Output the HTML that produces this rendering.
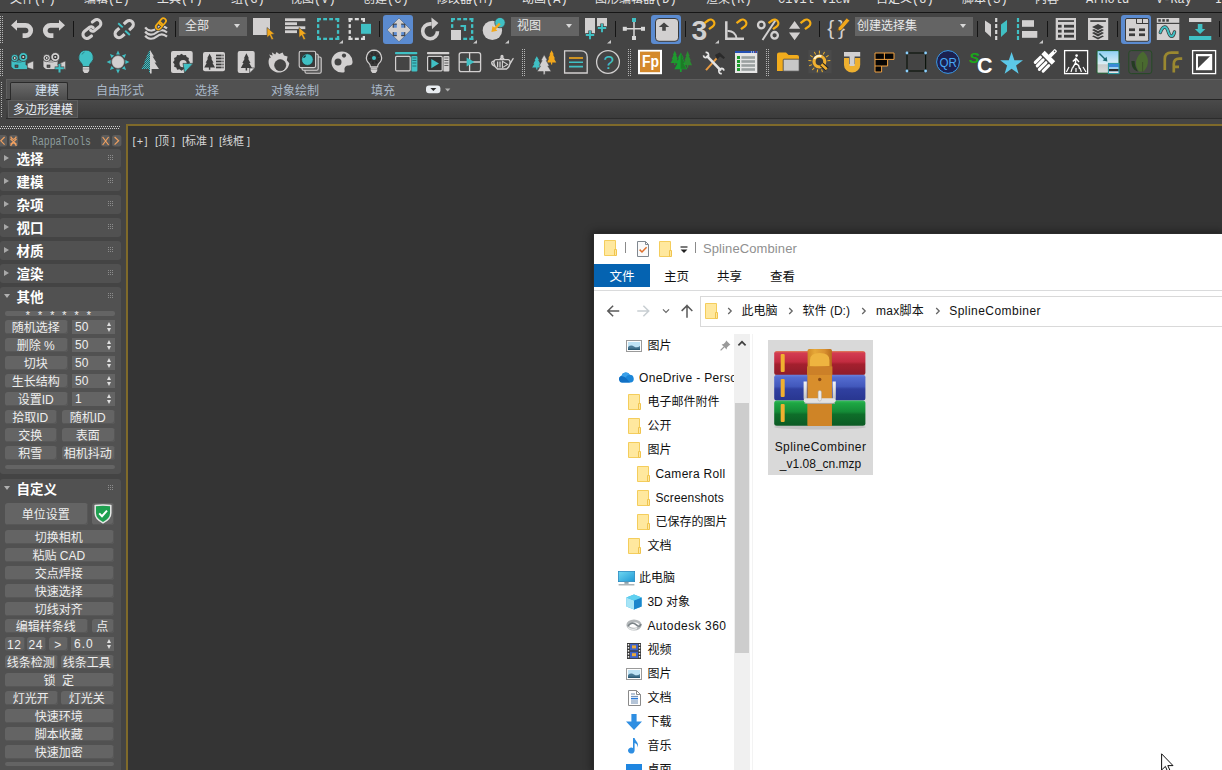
<!DOCTYPE html>
<html lang="zh-CN">
<head>
<meta charset="utf-8">
<title>SplineCombiner</title>
<style>
*{box-sizing:border-box;margin:0;padding:0}
html,body{width:1222px;height:770px;overflow:hidden;background:#444444}
body{position:relative;font-family:"Liberation Sans","Noto Sans CJK SC",sans-serif;font-size:12px;color:#e0e0e0}
.abs{position:absolute}
#app{position:absolute;left:0;top:0;width:1222px;height:770px;overflow:hidden;background:#444444}
/* ---------- menu ---------- */
#menubar{position:absolute;left:0;top:0;width:1222px;height:12px;background:#454545;overflow:hidden}
#menubar span{position:absolute;top:-7px;font:12px/14px "Liberation Mono","Noto Sans CJK SC",monospace;color:#e6e6e6;white-space:nowrap;}
#menubar span b{font-weight:normal;letter-spacing:0;font-family:"Noto Sans CJK SC",sans-serif}
#menuline{position:absolute;left:0;top:12px;width:1222px;height:1px;background:#161616}
/* ---------- toolbars ---------- */
.tb svg{position:absolute;width:32px;height:32px;overflow:visible}
.r1 svg{top:13px}
.r2 svg{top:46px}
.sep{position:absolute;width:1px;background:#1e1e1e}
.r1 .sep{top:20px;height:17px}
.dsep{position:absolute;top:49px;height:27px;width:3px;background-image:repeating-linear-gradient(to bottom,transparent 0 1px,#444 1px 2px),linear-gradient(90deg,#b4b4b4 0 1px,#444 1px 2px,#b4b4b4 2px 3px)}
.grip{position:absolute;left:0;width:3px;background-image:repeating-linear-gradient(to bottom,transparent 0 1px,#444 1px 2px),linear-gradient(90deg,#b4b4b4 0 1px,#444 1px 2px,#b4b4b4 2px 3px)}
.dd{position:absolute;top:17px;height:19px;background:#646464;color:#e8e8e8;font:12px/18px "Liberation Sans","Noto Sans CJK SC",sans-serif;padding-left:6px;white-space:nowrap}
.dd:after{content:"";position:absolute;right:7px;top:7px;border:3px solid transparent;border-top:4px solid #d8d8d8;border-bottom:0}
.act{position:absolute;background:#5b8bd0;border-radius:3px}
/* ---------- ribbon ---------- */
#ribbon{position:absolute;left:6px;top:79px;width:1216px;height:40px}
#rtabs{position:absolute;left:0;top:0;width:1216px;height:21px;background:#515151;border-top:1px solid #5e5e5e;border-left:1px solid #5e5e5e}
#rpanel{position:absolute;left:0;top:20px;width:1216px;height:20px;background:linear-gradient(#4a4a4a,#3b3b3b);border-top:1px solid #242424;border-bottom:1px solid #2c2c2c}
.rtab{position:absolute;top:3px;height:18px;font:12px/18px "Liberation Sans","Noto Sans CJK SC",sans-serif;color:#aab8c8;white-space:nowrap}
#rtab-act{position:absolute;left:4px;top:3px;width:58px;height:19px;background:linear-gradient(#6a6a6a,#4a4a4a);border:1px solid #2a2a2a;border-bottom:0;border-radius:2px 2px 0 0}
#rlabel{position:absolute;left:2px;top:21px;width:70px;height:18px;background:#4f4f4f;border:1px solid #5e5e5e;color:#e8ecf2;font:12px/18px "Liberation Sans","Noto Sans CJK SC",sans-serif;padding-left:4px;white-space:nowrap}
/* ---------- left panel ---------- */
#lp{position:absolute;left:0;top:0;width:126px;height:770px;overflow:hidden}
.ro{position:absolute;left:0;width:121px;background:#515151;border-radius:3px}
.roh{position:absolute;left:0;width:121px;height:19px}
.roh i{position:absolute;left:4px;top:6px;border:3px solid transparent;border-left:5px solid #a8a8a8;border-right:0}
.roh i.dn{left:4px;top:7px;border:3px solid transparent;border-top:4.5px solid #b0b0b0;border-bottom:0}
.roh b{position:absolute;left:16.5px;top:1.5px;font:bold 13.5px/17px "Liberation Sans","Noto Sans CJK SC",sans-serif;color:#ffffff;white-space:nowrap}
.roh u{position:absolute;left:108px;top:6px;width:6px;height:6px;background:radial-gradient(circle at .5px .5px,#8c8c8c .6px,transparent .7px) 0 0/2px 2px}
.btn{position:absolute;height:14px;background:#646464;border-radius:3px;box-shadow:inset -1px -1px 0 #575757;color:#eeeeee;font:12px/16px "Liberation Sans","Noto Sans CJK SC",sans-serif;text-align:center;white-space:nowrap;overflow:hidden;padding-right:1.5px}
.spn{position:absolute;height:14px;background:#646464;color:#eeeeee;font:12px/15px "Liberation Sans","Noto Sans CJK SC",sans-serif;padding-left:3px;white-space:nowrap}
.spn:before{content:"";position:absolute;right:3.5px;top:2px;border:2.8px solid transparent;border-bottom:4px solid #e0e0e0;border-top:0}
.spn:after{content:"";position:absolute;right:3.5px;top:7.6px;border:2.8px solid transparent;border-top:4px solid #e0e0e0;border-bottom:0}
.bar{position:absolute;left:5px;width:108px;height:4px;background:#646464;border-radius:2px}
/* ---------- viewport ---------- */
#vp{position:absolute;left:126px;top:124px;width:1096px;height:646px;background:#343434;border-left:2px solid #7f6a2a;border-top:2px solid #7f6a2a}
#vplabel{position:absolute;left:5px;top:8px;font:11px/14px "Liberation Sans","Noto Sans CJK SC",sans-serif;color:#d6d6d6;white-space:nowrap}#vplabel span{position:absolute;top:0}
/* ---------- explorer ---------- */
#ex{position:absolute;left:594px;top:234px;width:628px;height:536px;background:#ffffff;color:#000;box-shadow:0 0 0 1px #2b2b2b,0 0 8px 2px rgba(0,0,0,.45);overflow:hidden;font-family:"Liberation Sans","Noto Sans CJK SC",sans-serif}
#ex .t{position:absolute;white-space:nowrap;font-size:12px;line-height:16px;color:#111}
#ex svg{position:absolute;overflow:visible}
#ex .tt{letter-spacing:-.15px}
#ex .a1,#ex .f1{letter-spacing:.45px}
#ex .ad{letter-spacing:.47px}
#ex .od{letter-spacing:.35px;width:95px;overflow:hidden}
#ex .cr{letter-spacing:.3px}
#ex .ss{letter-spacing:.17px}
</style>
</head>
<body>
<div id="app">
<div id="menubar"><span style="left:10px">文件(F)</span><span style="left:84px">编辑(E)</span><span style="left:157px">工具(T)</span><span style="left:231px">组(G)</span><span style="left:290px">视图(V)</span><span style="left:363px">创建(C)</span><span style="left:436px">修改器(M)</span><span style="left:522px">动画(A)</span><span style="left:595px">图形编辑器(D)</span><span style="left:706px">渲染(R)</span><span style="left:778px">Civil View</span><span style="left:876px">自定义(U)</span><span style="left:962px">脚本(S)</span><span style="left:1035px">内容</span><span style="left:1086px">Arnold</span><span style="left:1156px">V-Ray</span><span style="left:1215px">Interactive</span></div><div id="menuline"></div>
<div class="grip" style="top:16px;height:27px"></div>
<div class="act" style="left:383px;top:15px;width:30px;height:29px"></div>
<div class="act" style="left:651px;top:15px;width:30px;height:29px"></div>
<div class="act" style="left:1121px;top:15px;width:30px;height:29px"></div>
<div class="dd" style="left:179px;width:68px">全部</div>
<div class="dd" style="left:511px;width:68px">视图</div>
<div class="dd" style="left:855px;width:118px;padding-left:2px">创建选择集</div>
<svg class="abs" style="left:0;top:13px" width="1222" height="34" viewBox="0 13 1222 34">
<defs>
<path id="mag" d="M-3.75,4.8 V0 A3.75,3.75 0 0 1 3.75,0 V4.8" fill="none" stroke="#f5ad14" stroke-width="2.3"/>
<path id="fly" d="M0,3.5 L4,3.5 L4,0 Z" fill="#c8c8c8"/>
<path id="cur" d="M0,0 L7.6,6.4 L4.4,7 L6.6,11.4 L4.6,12.3 L2.6,7.9 L0,10 Z" fill="#f2a71b" stroke="#444" stroke-width=".6"/>
</defs>
<g fill="#151515">
<rect x="73" y="21" width="1" height="16"/><rect x="175" y="21" width="1" height="16"/><rect x="379" y="21" width="1" height="16"/>
<rect x="615" y="21" width="1" height="16"/><rect x="685" y="21" width="1" height="16"/><rect x="819" y="21" width="1" height="16"/>
<rect x="977" y="21" width="1" height="16"/><rect x="1047" y="21" width="1" height="16"/><rect x="1117" y="21" width="1" height="16"/><rect x="1219" y="21" width="1" height="16"/>
</g>
<!-- undo -->
<g fill="none" stroke="#d2d0d0" stroke-width="4.7">
<path d="M16.5,25.35 H25.6 A5.15,5.15 0 0 1 25.6,35.65 H22.6"/>
<path d="M59.5,25.35 H50.4 A5.15,5.15 0 0 0 50.4,35.65 H53.4"/>
</g>
<path d="M11,25.3 L17,19.8 V30.8 Z M65,25.3 L59,19.8 V30.8 Z" fill="#d2d0d0"/>
<!-- link -->
<g fill="none" stroke="#d2d0d0" stroke-width="3.1" stroke-linecap="round" transform="translate(91.9,29) rotate(-38)">
<path d="M-4.6,5.2 H-7.2 A4,4 0 0 1 -7.2,-2.8 H-0.8 A2.6,2.6 0 0 1 1.8,-0.2"/>
<path d="M4.6,-5.2 H7.2 A4,4 0 0 1 7.2,2.8 H0.8 A2.6,2.6 0 0 1 -1.8,0.2"/>
</g>
<!-- unlink -->
<g fill="none" stroke="#d2d0d0" stroke-width="3.1" transform="translate(124.2,29.1) rotate(-42)">
<path d="M-3,-4 H-6.9 A4,4 0 0 0 -6.9,4 H-3"/>
<path d="M3,-4 H6.9 A4,4 0 0 1 6.9,4 H3"/>
</g>
<path d="M118.2,23.2 L122.8,27.4 M125.2,30.8 L129.8,35" stroke="#40c0c4" stroke-width="1.9"/>
<!-- bind space warp -->
<g fill="none" stroke="#d2d0d0" stroke-width="2.2">
<path d="M145.2,27.4 C148,31.4 153,31.4 156.5,28.4 S163,24.9 167,28.4"/>
<path d="M145.2,31.5 C148,35.5 153,35.5 156.5,32.5 S163,29 167,32.5"/>
<path d="M145.2,35.6 C148,39.6 153,39.6 156.5,36.6 S163,33.1 167,36.6"/>
</g>
<g fill="none" stroke="#444" stroke-width="3.4" transform="translate(160.9,23.8) rotate(-50)">
<rect x="-6.5" y="-2.6" width="7.5" height="5.2" rx="2.6"/><rect x="-1" y="-2.6" width="7.5" height="5.2" rx="2.6"/>
</g>
<g fill="none" stroke="#f5ad14" stroke-width="1.7" transform="translate(160.9,23.8) rotate(-50)">
<rect x="-6.5" y="-2.6" width="7.5" height="5.2" rx="2.6"/><rect x="-1" y="-2.6" width="7.5" height="5.2" rx="2.6"/>
</g>
<!-- select object -->
<rect x="253" y="18" width="17" height="17" fill="#d2d0d0"/>
<use href="#cur" x="267" y="27.5"/>
<!-- select by name -->
<g fill="#d2d0d0"><rect x="285" y="18.3" width="20.3" height="2.8"/><rect x="285" y="22.3" width="12" height="2.8"/><rect x="285" y="26.3" width="20.3" height="2.8"/><rect x="285" y="30.3" width="12" height="2.8"/></g>
<use href="#cur" x="299" y="27.5"/>
<!-- rect region -->
<g fill="#40c0c4"><rect x="317.00" y="18.00" width="4.00" height="2.30"/><rect x="317.00" y="37.70" width="4.00" height="2.30"/><rect x="323.20" y="18.00" width="3.80" height="2.30"/><rect x="323.20" y="37.70" width="3.80" height="2.30"/><rect x="329.20" y="18.00" width="3.80" height="2.30"/><rect x="329.20" y="37.70" width="3.80" height="2.30"/><rect x="335.20" y="18.00" width="4.00" height="2.30"/><rect x="335.20" y="37.70" width="4.00" height="2.30"/><rect x="317.00" y="18.00" width="2.30" height="4.00"/><rect x="336.90" y="18.00" width="2.30" height="4.00"/><rect x="317.00" y="24.20" width="2.30" height="3.70"/><rect x="336.90" y="24.20" width="2.30" height="3.70"/><rect x="317.00" y="30.10" width="2.30" height="3.70"/><rect x="336.90" y="30.10" width="2.30" height="3.70"/><rect x="317.00" y="36.00" width="2.30" height="4.00"/><rect x="336.90" y="36.00" width="2.30" height="4.00"/></g>
<use href="#fly" x="339" y="40"/>
<!-- window crossing -->
<g fill="#dcdcdc"><rect x="348.60" y="18.00" width="4.00" height="2.30"/><rect x="348.60" y="37.70" width="4.00" height="2.30"/><rect x="354.80" y="18.00" width="4.00" height="2.30"/><rect x="354.80" y="37.70" width="4.00" height="2.30"/><rect x="361.00" y="18.00" width="4.00" height="2.30"/><rect x="361.00" y="37.70" width="4.00" height="2.30"/><rect x="348.60" y="18.00" width="2.30" height="4.00"/><rect x="362.70" y="18.00" width="2.30" height="4.00"/><rect x="348.60" y="24.20" width="2.30" height="3.70"/><rect x="362.70" y="24.20" width="2.30" height="3.70"/><rect x="348.60" y="30.10" width="2.30" height="3.70"/><rect x="362.70" y="30.10" width="2.30" height="3.70"/><rect x="348.60" y="36.00" width="2.30" height="4.00"/><rect x="362.70" y="36.00" width="2.30" height="4.00"/></g>
<rect x="360.5" y="23.3" width="11" height="11" fill="#40c0c4" stroke="#444" stroke-width="1"/>
<!-- move -->
<g transform="translate(399,29.9)">
<path d="M0,-11.9 L11.9,0 L0,11.9 L-11.9,0 Z" fill="#d2d0d0" stroke="#46607e" stroke-width=".6"/>
<g fill="#5b8bd0"><rect x="-5.8" y="-5.8" width="3.6" height="3.6"/><rect x="2.2" y="-5.8" width="3.6" height="3.6"/><rect x="-5.8" y="2.2" width="3.6" height="3.6"/><rect x="2.2" y="2.2" width="3.6" height="3.6"/></g>
<path d="M-5.8,-2.2 V-5.8 H-2.2 M5.8,-2.2 V-5.8 H2.2 M-5.8,2.2 V5.8 H-2.2 M5.8,2.2 V5.8 H2.2" fill="none" stroke="#333" stroke-width="1"/>
</g>
<!-- rotate -->
<path d="M431.6,23.9 H430.1 A7.4,7.4 0 1 0 437.5,31.2" fill="none" stroke="#d2d0d0" stroke-width="3.6"/>
<path d="M431.4,17.5 L438.4,23 L432,29.2 Z" fill="#d2d0d0"/>
<!-- scale -->
<g fill="#40c0c4"><rect x="451.00" y="18.00" width="4.00" height="2.30"/><rect x="451.00" y="37.70" width="4.00" height="2.30"/><rect x="457.20" y="18.00" width="3.85" height="2.30"/><rect x="457.20" y="37.70" width="3.85" height="2.30"/><rect x="463.25" y="18.00" width="3.85" height="2.30"/><rect x="463.25" y="37.70" width="3.85" height="2.30"/><rect x="469.30" y="18.00" width="4.00" height="2.30"/><rect x="469.30" y="37.70" width="4.00" height="2.30"/><rect x="451.00" y="18.00" width="2.30" height="4.00"/><rect x="471.00" y="18.00" width="2.30" height="4.00"/><rect x="451.00" y="24.20" width="2.30" height="3.70"/><rect x="471.00" y="24.20" width="2.30" height="3.70"/><rect x="451.00" y="30.10" width="2.30" height="3.70"/><rect x="471.00" y="30.10" width="2.30" height="3.70"/><rect x="451.00" y="36.00" width="2.30" height="4.00"/><rect x="471.00" y="36.00" width="2.30" height="4.00"/></g><rect x="450" y="29" width="12.2" height="12" fill="#444"/>
<rect x="451" y="30" width="10" height="10" fill="#d2d0d0"/>
<path d="M460.5,26 H465 V31" fill="none" stroke="#40c0c4" stroke-width="2.2"/>
<use href="#fly" x="473" y="40"/>
<!-- placement -->
<circle cx="492.4" cy="30.4" r="9.7" fill="#d2d0d0"/>
<circle cx="500" cy="22.6" r="5.2" fill="#40c0c4" stroke="#444" stroke-width=".8"/>
<path d="M499.8,23.6 L494.4,29" stroke="#f2a71b" stroke-width="2.4"/><path d="M491.4,32 L492.6,26 L497.4,30.8 Z" fill="#f2a71b"/>
<use href="#fly" x="505" y="40"/>
<!-- pivot -->
<path d="M585,18 H595 V33.5 H585 Z M597,18 H607 V26.5 H597 Z" fill="#d2d0d0"/>
<path d="M590,30.5 V39.5 M585.5,35 H594.5 M602,23.5 V32.5 M597.5,28 H606.5" stroke="#444" stroke-width="3.4"/>
<path d="M590,30.8 V39.2 M585.8,35 H594.2 M602,23.8 V32.2 M597.8,28 H606.2" stroke="#40c0c4" stroke-width="1.9"/>
<use href="#fly" x="607" y="40"/>
<!-- manipulate -->
<path d="M634,20 V38 M625,28.8 H643" stroke="#d8d8d8" stroke-width="1.5"/>
<g fill="#d8d8d8"><rect x="622.8" y="26.8" width="4" height="4"/><rect x="641" y="26.8" width="4" height="4"/><rect x="632" y="36" width="4" height="4"/></g>
<rect x="632" y="18" width="4" height="4" fill="#40c0c4"/>
<!-- keyboard override -->
<rect x="655.5" y="18.5" width="23" height="22.8" rx="3.5" fill="#d2d0d0" stroke="#3a3a3a" stroke-width="1"/>
<path d="M664,22.4 L669.2,27 H665.8 V30.8 H662.2 V27 H658.8 Z" fill="#444"/>
<!-- snaps -->
<text x="691.5" y="40.1" font-family="Liberation Sans,sans-serif" font-weight="bold" font-size="28.3" fill="#d2d0d0">3</text>
<use href="#mag" transform="translate(710.6,23.3) rotate(53.6)"/>
<use href="#fly" x="715" y="40"/>
<path d="M726.3,21.2 V38.8 H744" fill="none" stroke="#d2d0d0" stroke-width="2.5"/>
<path d="M727.5,31 A8,8 0 0 1 736.5,38.5" fill="none" stroke="#d2d0d0" stroke-width="2"/>
<use href="#mag" transform="translate(742.6,23.3) rotate(53.6)"/>
<g fill="none" stroke="#d2d0d0" stroke-width="2.3"><circle cx="761.3" cy="25" r="3.3"/><circle cx="774.6" cy="35.3" r="3.3"/><path d="M762.5,40 L775.5,20.3" stroke-width="2"/></g>
<use href="#mag" transform="translate(774.6,23.3) rotate(53.6)"/>
<path d="M789,28.8 L794.6,21 L800.2,28.8 Z M789,32.5 L794.6,40.3 L800.2,32.5 Z" fill="#d2d0d0"/>
<use href="#mag" transform="translate(806.6,23.3) rotate(53.6)"/>
<!-- named sel -->
<text x="827.2" y="35.4" font-family="Liberation Sans,sans-serif" font-size="21" fill="#d2d0d0">{</text>
<text x="838" y="35.4" font-family="Liberation Sans,sans-serif" font-size="21" fill="#d2d0d0">}</text>
<path d="M837.4,31.6 L838.4,27.6 L846.6,18 L849.8,20.6 L841.4,30.2 Z" fill="#f2a71b" stroke="#444" stroke-width=".7"/>
<path d="M837.4,31.6 L838,29.2 L839.6,30.6 Z" fill="#6a4a10"/>
<!-- mirror -->
<path d="M985,20.5 L991,24.5 V37 L985,31.5 Z" fill="#d2d0d0"/>
<path d="M1001,24.5 L1007,20 V31.5 L1001,37 Z" fill="#40c0c4"/>
<path d="M996.2,18 V40" stroke="#d8d8d8" stroke-width="2.2" stroke-dasharray="4 2"/>
<!-- align -->
<path d="M1018,18 V40" stroke="#40c0c4" stroke-width="2.2" stroke-dasharray="4 2"/>
<rect x="1022" y="20.2" width="12" height="6.6" fill="#d2d0d0"/><rect x="1022" y="31" width="15.3" height="6.8" fill="#d2d0d0"/>
<use href="#fly" x="1039" y="40"/>
<!-- scene explorer -->
<rect x="1055.7" y="18" width="20.3" height="22" fill="#d2d0d0"/>
<g fill="#3c3c3c"><rect x="1058" y="20.2" width="16" height="1.7"/><rect x="1058" y="24.8" width="3.6" height="2.8"/><rect x="1064" y="24.8" width="10" height="2.8"/><rect x="1058" y="29.8" width="3.6" height="2.8"/><rect x="1064" y="29.8" width="10" height="2.8"/><rect x="1058" y="34.8" width="3.6" height="2.8"/><rect x="1064" y="34.8" width="10" height="2.8"/></g>
<!-- layer explorer -->
<rect x="1088" y="18" width="20.2" height="22" fill="#d2d0d0"/>
<g fill="#3c3c3c"><rect x="1090.3" y="20.2" width="15.6" height="1.7"/><path d="M1098,24 L1104,27 L1098,30 L1092,27 Z M1092,30 L1094,29 L1098,31 L1102,29 L1104,30 L1098,33.4 Z M1092,33 L1094,32 L1098,34 L1102,32 L1104,33 L1098,36.4 Z M1093.6,35.4 L1098,37.6 L1102.4,35.4 L1104,36.2 L1098,39.4 L1092,36.2 Z"/></g>
<!-- ribbon toggle -->
<rect x="1125.5" y="18.5" width="23.2" height="22.8" rx="1.5" fill="#d2d0d0" stroke="#3a3a3a" stroke-width="1"/>
<path d="M1136.5,19 V23.5 H1148.5 M1142.5,19 V23.5" fill="none" stroke="#3a3a3a" stroke-width="1"/>
<g fill="#3c3c3c"><rect x="1129" y="28.4" width="6" height="2.7"/><rect x="1139" y="28.4" width="6" height="2.7"/><rect x="1129" y="33.4" width="6" height="2.7"/><rect x="1139" y="33.4" width="6" height="2.7"/></g>
<!-- curve editor -->
<rect x="1156.8" y="18" width="22.5" height="4.8" fill="#d2d0d0"/><rect x="1156.8" y="24" width="22.5" height="16" fill="#d2d0d0"/>
<g fill="#3c3c3c"><rect x="1158.3" y="19.2" width="2.5" height="2.5"/><rect x="1162.3" y="19.2" width="2.5" height="2.5"/><rect x="1166.3" y="19.2" width="2.5" height="2.5"/></g>
<path d="M1160.3,32.5 C1163,25 1166.5,25.5 1168.2,31.5 S1173,38 1174.5,32" fill="none" stroke="#3a3a3a" stroke-width="3.4" stroke-linecap="round"/>
<path d="M1160.3,32.5 C1163,25 1166.5,25.5 1168.2,31.5 S1173,38 1174.5,32" fill="none" stroke="#40c0c4" stroke-width="2" stroke-linecap="round"/>
<!-- schematic -->
<rect x="1189" y="18" width="22.3" height="4" fill="#d2d0d0"/>
<path d="M1197.8,24 H1202.4 V29 H1205.4 L1200.1,34 L1194.8,29 H1197.8 Z" fill="#40c0c4"/>
<rect x="1189" y="36" width="22.3" height="4" fill="#40c0c4"/>
</svg>

<div class="grip" style="top:49px;height:27px"></div>
<div class="dsep" style="left:522px"></div><div class="dsep" style="left:628px"></div><div class="dsep" style="left:766px"></div>
<svg class="abs" style="left:0;top:46px" width="1222" height="34" viewBox="0 46 1222 34">
<defs>
<path id="tree" d="M0,-11 L4.2,-5 H2.6 L6.6,0.6 H4.6 L9,6.4 H1.2 V9.4 H-1.2 V6.4 H-9 L-4.6,0.6 H-6.6 L-2.6,-5 H-4.2 Z"/>
<g id="cam"><path d="M0,3 H15 V8 H16.5 V12.6 H3 L0,10 Z"/><circle cx="3.7" cy="1" r="3.7"/><circle cx="12.3" cy="0" r="4.5"/></g>
<pattern id="dots" width="2" height="2" patternUnits="userSpaceOnUse"><rect width="2" height="2" fill="#2f5a5e"/><rect width="1" height="1" fill="#40c0c4"/><rect x="1" y="1" width="1" height="1" fill="#40c0c4"/></pattern>
</defs>
<!-- camera 1 -->
<g transform="translate(11,57)"><use href="#cam" fill="#40c0c4" stroke="#3a3a3a" stroke-width=".8"/><path d="M16.4,6.6 L22.5,4 V12.5 L16.4,10.6 Z" fill="#d2d0d0" stroke="#444" stroke-width=".5"/><circle cx="3.7" cy="1" r="1.5" fill="#d8d8d8" stroke="#333" stroke-width="1"/><circle cx="12.3" cy="0" r="1.7" fill="#d8d8d8" stroke="#333" stroke-width="1.2"/><rect x="4" y="8" width="3" height="2.4" fill="#555" stroke="#2a2a2a" stroke-width=".6"/><rect x="5.5" y="4.5" width="5" height="1" fill="#2a7a80"/></g>
<!-- camera 2 -->
<g transform="translate(43,57)"><use href="#cam" fill="#d2d0d0" stroke="#3a3a3a" stroke-width=".8"/><path d="M16.4,6.6 L22.5,4 V12.5 L16.4,10.6 Z" fill="#d2d0d0" stroke="#444" stroke-width=".5"/><circle cx="3.7" cy="1" r="1.5" fill="#d8d8d8" stroke="#333" stroke-width="1"/><circle cx="12.3" cy="0" r="1.7" fill="#d8d8d8" stroke="#333" stroke-width="1.2"/><rect x="4" y="8" width="3" height="2.4" fill="#555" stroke="#2a2a2a" stroke-width=".6"/><rect x="5.5" y="4.5" width="5" height="1" fill="#888"/>
<path d="M16.5,6.5 V16 M11.7,11.3 H21.3" stroke="#444" stroke-width="3.6"/><path d="M16.5,7 V15.6 M12.2,11.3 H20.8" stroke="#40c0c4" stroke-width="2"/></g>
<!-- bulb -->
<path d="M86,50.2 A7.3,7.3 0 0 1 90.6,63.2 C89.6,64.4 89.4,65.3 89.4,66.6 H82.6 C82.6,65.3 82.4,64.4 81.4,63.2 A7.3,7.3 0 0 1 86,50.2 Z" fill="#40c0c4" stroke="#333" stroke-width=".6"/>
<path d="M82.8,67 H89.2 V71 L87.6,73 H84.4 L82.8,71 Z" fill="#d2d0d0"/><path d="M82.8,69 H89.2" stroke="#999" stroke-width=".8"/>
<path d="M82,54.5 Q82.8,52.6 84.6,52" stroke="#2a7a80" stroke-width=".8" fill="none"/>
<!-- sun -->
<g transform="translate(118,62)"><g fill="#40c0c4"><path id="ray" d="M-1.9,-7.4 L0,-11.4 L1.9,-7.4 Z"/><use href="#ray" transform="rotate(45)"/><use href="#ray" transform="rotate(90)"/><use href="#ray" transform="rotate(135)"/><use href="#ray" transform="rotate(180)"/><use href="#ray" transform="rotate(225)"/><use href="#ray" transform="rotate(270)"/><use href="#ray" transform="rotate(315)"/></g><circle r="6.4" fill="#d2d0d0" stroke="#555" stroke-width=".5"/></g>
<!-- half tree -->
<path d="M150,50 L146,56.4 H147.4 L143.6,62.4 H145.4 L141,69 H149 V73 H150 Z" fill="url(#dots)"/>
<path d="M150,50 L154,56.4 H152.6 L156.4,62.4 H154.6 L159,69 H151.6 V73.4 H150 Z" fill="#d2d0d0"/>
<!-- render saw on page -->
<rect x="171" y="51" width="21.7" height="22" rx="2" fill="#d2d0d0"/>
<g transform="translate(181.5,62.3)"><path d="M0,-8.5 L2,-7 L4.4,-7.4 L5.2,-5.2 L7.4,-4.4 L7,-2 L8.5,0 L7,2 L7.4,4.4 L5.2,5.2 L4.4,7.4 L2,7 L0,8.5 L-2,7 L-4.4,7.4 L-5.2,5.2 L-7.4,4.4 L-7,2 L-8.5,0 L-7,-2 L-7.4,-4.4 L-5.2,-5.2 L-4.4,-7.4 L-2,-7 Z" fill="#3c3c3c"/><circle cx="1.6" cy="1.4" r="3.6" fill="#d2d0d0"/></g>
<path d="M193.2,63.2 V73.4 H183.6 Z" fill="#444"/><path d="M183,63.4 H193 L184.6,72.8 Z" fill="#40c0c4" stroke="#3c3c3c" stroke-width=".7"/>
<!-- tree list -->
<rect x="203" y="52" width="22" height="19.2" rx="2" fill="#d2d0d0"/>
<use href="#tree" transform="translate(209.6,62.4) scale(.6,.78)" fill="#3c3c3c"/>
<g fill="#3c3c3c"><rect x="216" y="54.6" width="5.6" height="1.7"/><rect x="216" y="57.6" width="5.6" height="1.7"/><rect x="216" y="60.6" width="5.6" height="1.7"/><rect x="216" y="63.6" width="5.6" height="1.7"/><rect x="216" y="66.6" width="5.6" height="1.7"/><rect x="222.4" y="54.6" width="1.2" height="1.7"/><rect x="222.4" y="57.6" width="1.2" height="1.7"/><rect x="222.4" y="60.6" width="1.2" height="1.7"/><rect x="222.4" y="63.6" width="1.2" height="1.7"/><rect x="222.4" y="66.6" width="1.2" height="1.7"/></g>
<!-- tree page -->
<path d="M239.7,51 H252.7 Q254.7,51 254.7,53 V68 L249.7,73 H239.7 Q237.7,73 237.7,71 V53 Q237.7,51 239.7,51 Z" fill="#d2d0d0"/>
<use href="#tree" transform="translate(246.4,62.6) scale(.62,.84)" fill="#3c3c3c"/>
<path d="M249.7,73 V68 H254.7 Z" fill="#e6e6e6" stroke="#3c3c3c" stroke-width=".7"/>
<!-- saw gray -->
<g transform="translate(278.6,62.6)"><path d="M-2,-10.6 L0.6,-8.6 L4,-10 L5.4,-7 L9,-6 L8.2,-2.4 L10.7,0.6 A10.4,10.4 0 1 1 -9,-5 L-7.6,-4.6 L-9.4,-8 L-6,-7 L-6.8,-10.4 L-3.4,-8.2 Z" fill="#d2d0d0"/><circle cx="1.6" cy="2.6" r="5.6" fill="#444" stroke="#333" stroke-width=".6"/></g>
<!-- material editor -->
<g fill="#5a5a5a" stroke="#d2d0d0" stroke-width="1.1"><rect x="305" y="57" width="16.2" height="16.2" rx="1.5"/><rect x="302" y="54" width="16.2" height="16.2" rx="1.5"/><rect x="299.2" y="51.2" width="16.4" height="16.4" rx="1.5" fill="#3a3a3a"/></g>
<circle cx="307.4" cy="59.6" r="5.8" fill="#40c0c4" stroke="#222" stroke-width=".6"/><ellipse cx="304.6" cy="56.6" rx="1.6" ry=".9" fill="#1e3a3e" transform="rotate(-40 304.6 56.6)"/>
<!-- palette -->
<path d="M342,51.4 A10.6,10.6 0 0 1 352.6,62 C352.6,64.4 351,65.6 348.6,65.6 C345.8,65.6 344,67.6 344.6,70.4 C345,72.2 344,72.6 342,72.6 A10.6,10.6 0 0 1 342,51.4 Z" fill="#d2d0d0"/>
<circle cx="338" cy="62" r="3.5" fill="#444"/><circle cx="344" cy="55.6" r="2.1" fill="#444"/>
<!-- bulb gear -->
<path d="M374,50.2 A7.6,7.6 0 0 1 378.8,63.6 C377.8,64.8 377.6,65.6 377.6,66.8 H370.4 C370.4,65.6 370.2,64.8 369.2,63.6 A7.6,7.6 0 0 1 374,50.2 Z" fill="#3a3a3a" stroke="#d2d0d0" stroke-width="1.2"/>
<circle cx="374" cy="58" r="4.6" fill="none" stroke="#2a2a2a" stroke-width="2.4" stroke-dasharray="2 1.6"/><circle cx="374" cy="58" r="3.6" fill="#333"/>
<circle cx="374" cy="58" r="2" fill="#40c0c4"/>
<path d="M370.8,67.4 H377.2 V71 L375.6,73 H372.4 L370.8,71 Z" fill="#d2d0d0"/><path d="M370.8,69.2 H377.2" stroke="#888" stroke-width=".8"/>
<!-- render setup -->
<rect x="395" y="52" width="22.3" height="2.2" rx=".8" fill="#40c0c4"/>
<rect x="395.6" y="56.4" width="14.6" height="14.4" rx="1" fill="#444" stroke="#d2d0d0" stroke-width="1.2"/>
<rect x="411.4" y="56" width="6" height="15.4" rx="1" fill="#40c0c4"/><path d="M412.4,58 H416.4 M412.4,60.5 H416.4 M412.4,63 H416.4 M412.4,66 H416.4" stroke="#246a70" stroke-width=".9"/>
<!-- rendered frame -->
<rect x="427" y="52" width="22.3" height="2.2" rx=".8" fill="#d2d0d0"/>
<rect x="427.6" y="56.4" width="14.6" height="14.4" rx="1" fill="#333" stroke="#d2d0d0" stroke-width="1.2"/>
<path d="M431.3,59 L439,63.6 L431.3,68.2 Z" fill="#40c0c4"/>
<rect x="443.4" y="56" width="6" height="15.4" rx="1" fill="#d2d0d0"/><path d="M444.4,58 H448.4 M444.4,60.5 H448.4 M444.4,63 H448.4 M444.4,65.5 H448.4" stroke="#555" stroke-width=".9"/>
<!-- 4 view -->
<rect x="459.2" y="52.6" width="21.4" height="19" rx="2.2" fill="none" stroke="#d2d0d0" stroke-width="1.3"/>
<path d="M469.6,52.6 V71.6 M459.2,62 H480.6" stroke="#d2d0d0" stroke-width="1.3"/>
<path d="M466.6,57.6 L474.4,62 L466.6,66.4 Z" fill="#40c0c4"/>
<!-- teapot -->
<g fill="none" stroke="#d2d0d0" stroke-width="1.4"><path d="M496,59.6 H508 C510,59.6 510.4,62 510,63.6 C509.4,66.6 508,68 506.6,69 H497.4 C496,68 494.6,66.6 494,63.6 C493.6,62 494,59.6 496,59.6 Z"/><path d="M494.4,61.4 C491,60.4 490.6,64.6 494.8,66.4"/><path d="M509.8,63.6 C512,62 512,59 513.6,58.4"/><path d="M500,59.4 C500,57.6 504,57.6 504,59.4"/><circle cx="502" cy="56.4" r=".9"/></g>
<path d="M497.6,61.4 V67.4 M500,61.4 V67.4" stroke="#d2d0d0" stroke-width="1.3"/><path d="M502.4,61.2 L507.6,64.4 L502.4,67.6 Z" fill="none" stroke="#d2d0d0" stroke-width="1.1"/>
<!-- trees icon -->
<use href="#tree" transform="translate(536.8,63.4) scale(.52,.66)" fill="#40c0c4"/>
<use href="#tree" transform="translate(551.6,58) scale(.52,.7)" fill="#f2a71b"/>
<use href="#tree" transform="translate(544.2,65.4) scale(.78,.96)" fill="#d2d0d0" stroke="#444" stroke-width=".6"/>
<!-- doc lines -->
<path d="M564.6,50.8 H581 Q587.2,50.8 587.2,57 V73 H564.6 Z" fill="none" stroke="#d2d0d0" stroke-width="1.3"/>
<path d="M569,58 H583" stroke="#f2a71b" stroke-width="1.6"/><path d="M569,62.2 H583 M569,66.6 H583" stroke="#40c0c4" stroke-width="1.6"/>
<!-- help -->
<circle cx="608" cy="62" r="11.4" fill="none" stroke="#d2d0d0" stroke-width="1.3"/>
<text x="603.4" y="68.6" font-family="Liberation Sans,sans-serif" font-size="19" fill="#40c0c4">?</text>
<!-- Fp -->
<rect x="638" y="49.8" width="24" height="24.4" fill="#ffffff"/><rect x="640" y="51.6" width="20" height="20.6" fill="#d4892c"/>
<text x="642" y="67" font-family="Liberation Sans,sans-serif" font-weight="bold" font-size="16" fill="#ffffff" textLength="17" lengthAdjust="spacingAndGlyphs">Fp</text>
<!-- green trees -->
<use href="#tree" transform="translate(674.8,58.5) scale(.46,.7)" fill="#1f9a2e"/>
<use href="#tree" transform="translate(687.6,60) scale(.5,.82)" fill="#2a8a30"/>
<use href="#tree" transform="translate(680.8,63) scale(.72,.96)" fill="#16a030"/>
<path d="M680.6,52.4 L683,58 L682,58 L684.6,63 L683.2,63 L686.2,68.8 H680.6 Z" fill="#1c7a26"/>
<!-- tools -->
<path d="M706,70.2 L716.6,58.4" stroke="#e89a40" stroke-width="2"/><path d="M715,55 L719.6,52.6 L725,57.6 L723.6,59 L720,56.4 L717.4,59.4 Z" fill="#2a2a2a"/>
<path d="M706.6,55.6 L721,70.6" stroke="#e4e4e4" stroke-width="2.6"/>
<circle cx="706" cy="55" r="2.6" fill="none" stroke="#e4e4e4" stroke-width="1.6" stroke-dasharray="12 4.4" transform="rotate(-100 706 55)"/>
<circle cx="721.4" cy="71" r="2.6" fill="none" stroke="#e4e4e4" stroke-width="1.6" stroke-dasharray="12 4.4" transform="rotate(80 721.4 71)"/>
<!-- list -->
<rect x="735" y="51" width="22.3" height="22" fill="#e6e6e6"/><rect x="735" y="51" width="22.3" height="2" fill="#2450b4"/>
<rect x="751" y="51.5" width="1" height="1" fill="#fff"/><rect x="753" y="51.5" width="1" height="1" fill="#fff"/><rect x="755" y="51.5" width="1" height="1" fill="#e03030"/>
<g fill="#1c9a2c"><rect x="737" y="56" width="3" height="3"/><rect x="737" y="60" width="3" height="3"/><rect x="737" y="64" width="3" height="3"/><rect x="737" y="68" width="3" height="3"/></g>
<g fill="#9aa0a0"><rect x="741.4" y="56.2" width="13.6" height="2.6"/><rect x="741.4" y="60.2" width="13.6" height="2.6"/><rect x="741.4" y="64.2" width="13.6" height="2.6"/><rect x="741.4" y="68.2" width="13.6" height="2.6"/></g>
<!-- folder -->
<path d="M777,54.4 Q777,52.4 779,52.4 H786 L788.6,55 H797 Q799,55 799,57 V71 H777 Z" fill="#f2ac1c"/>
<rect x="783.2" y="59.2" width="16" height="12" rx=".8" fill="#c8c8c8" stroke="#444" stroke-width=".8"/>
<!-- Q sun -->
<rect x="808.5" y="50" width="23" height="23.4" fill="#4a4a4a"/>
<g transform="translate(819.4,61.6)"><g stroke="#f0b428" stroke-width="1"><path id="r2" d="M0,-8 V-11"/><use href="#r2" transform="rotate(28)"/><use href="#r2" transform="rotate(56)"/><use href="#r2" transform="rotate(84)"/><use href="#r2" transform="rotate(-28)"/><use href="#r2" transform="rotate(-56)"/><use href="#r2" transform="rotate(-84)"/><use href="#r2" transform="rotate(-112)"/><use href="#r2" transform="rotate(-140)"/><use href="#r2" transform="rotate(-168)"/><use href="#r2" transform="rotate(164)"/></g>
<circle r="5.4" fill="#3a3a3a" stroke="#f0b030" stroke-width="3.2"/><path d="M-5.2,-2.6 A5.8,5.8 0 0 1 2,-5.4" stroke="#fff4d0" stroke-width="2" fill="none"/><path d="M2,2.6 L7.6,7.8" stroke="#1e1e1e" stroke-width="4.6"/><path d="M2,2.6 L7.4,7.6" stroke="#f0b030" stroke-width="2.6"/></g>
<!-- U T -->
<path d="M844,58 V65 A8,7.4 0 0 0 860.2,65 V58 H855 V64 H849 V58 Z" fill="#eeb030"/>
<path d="M844,52 H860.2 V56.6 H854.6 V66 H849.6 V56.6 H844 Z" fill="#d2d0d0"/>
<!-- bricks -->
<path d="M875,53 H894 V59.4 H887.6 V66 H881.6 V72 H875 Z" fill="#050505" stroke="#f0a040" stroke-width="1"/>
<path d="M884.4,53 V59.4 M875,59.4 H887.6 M875,66 H881.6" stroke="#f0a040" stroke-width="1"/>
<!-- rect with dots -->
<rect x="907" y="53" width="18.6" height="18" fill="none" stroke="#0c140c" stroke-width="1.2"/>
<g fill="#8ad0ff"><circle cx="907" cy="53" r="1.4"/><circle cx="925.6" cy="53" r="1.4"/><circle cx="907" cy="71" r="1.4"/><circle cx="925.6" cy="71" r="1.4"/></g>
<!-- QR -->
<circle cx="948" cy="62" r="11.4" fill="#1c2150" stroke="#3a9ae8" stroke-width="1"/>
<text x="939.4" y="67" font-family="Liberation Sans,sans-serif" font-size="13.5" fill="#48a8f4" textLength="17.4" lengthAdjust="spacingAndGlyphs">QR</text>
<!-- SC -->
<text x="969" y="63" font-family="Liberation Sans,sans-serif" font-size="15.5" font-style="italic" font-weight="bold" fill="#1aa81a">S</text>
<text x="977" y="72.8" font-family="Liberation Sans,sans-serif" font-weight="bold" font-size="21.5" fill="#ffffff">C</text>
<!-- star -->
<path d="M1011.6,52 L1014.4,60.2 L1023,60.3 L1016.1,65.5 L1018.6,73.8 L1011.6,68.8 L1004.6,73.8 L1007.1,65.5 L1000.2,60.3 L1008.8,60.2 Z" fill="#5cc8e8"/>
<!-- brush -->
<g transform="translate(1044,62) rotate(45)" fill="#ffffff"><rect x="-1.8" y="-17" width="3.6" height="9" rx="1"/><circle cx="0" cy="-15" r=".8" fill="#555"/><path d="M-7.4,-8.4 H7.4 V-3.6 H-7.4 Z" /><rect x="-7.4" y="-2.4" width="3" height="10.4" rx="1.5"/><rect x="-3.6" y="-2.4" width="3" height="11.4" rx="1.5"/><rect x="0.4" y="-2.4" width="3" height="12.4" rx="1.5"/><rect x="4.4" y="-2.4" width="3" height="11" rx="1.5"/></g>
<!-- pedestrian -->
<rect x="1064.6" y="50.6" width="23" height="23" fill="#3c3c3c" stroke="#ffffff" stroke-width="1.3"/>
<g fill="none" stroke="#ffffff" stroke-width="1.4"><circle cx="1076.6" cy="55.6" r="1.3" fill="#fff" stroke="none"/><path d="M1076,57.6 L1075.4,63 L1072.6,68 M1075.4,63 L1078.6,65.4 L1079.6,69 M1075.8,58.6 L1072.8,61.6 M1076.2,58.6 L1079,62"/></g>
<path d="M1069,67 L1066.4,72 M1072.4,67.6 L1071,72 M1076,68 V72 M1080,68 L1081.4,72 M1083,67 L1086,72" stroke="#fff" stroke-width="1.2"/>
<!-- image resize -->
<defs><linearGradient id="sky" x1="0" y1="0" x2="0" y2="1"><stop offset="0" stop-color="#8cd0f4"/><stop offset=".6" stop-color="#dceef4"/><stop offset=".62" stop-color="#c8cccc"/><stop offset="1" stop-color="#d8dcdc"/></linearGradient></defs>
<rect x="1097" y="50.6" width="22" height="22.6" rx="1" fill="url(#sky)" stroke="#1a5a2a" stroke-width="1"/>
<path d="M1099.4,53.4 L1105.6,59.8" stroke="#1a6a74" stroke-width="1.4"/><path d="M1107.4,61.6 L1102.6,60.6 L1106.6,56.8 Z" fill="#1a6a74"/>
<rect x="1108.4" y="63.4" width="10.6" height="10.2" fill="#3a88d8" stroke="#2a9aa0" stroke-width="1"/><rect x="1109" y="67" width="9.4" height="2" fill="#9ad0f0"/><rect x="1109" y="69" width="9.4" height="2.4" fill="#2a2a2a"/><rect x="1109" y="71.4" width="9.4" height="1.6" fill="#e8e8e8"/>
<!-- leaf -->
<rect x="1128.8" y="50.6" width="23" height="23" rx="2.6" fill="#484848" stroke="#264a26" stroke-width="1"/>
<path d="M1143,51.6 C1149,56 1150,65 1143.6,71.6 L1139,71.6 C1133.6,65 1135.6,56 1143,51.6 Z" fill="#4a6a30"/>
<path d="M1131.4,61 C1131.4,67.6 1134,70.4 1138,71.4 C1136,68 1134.6,65 1134.6,61 Z" fill="#243c22"/>
<path d="M1142.6,62 V71.6" stroke="#3a4a2a" stroke-width=".8"/>
<!-- rF -->
<g fill="none" stroke="#9a8830" stroke-width="2.7"><path d="M1164.8,70 V59 Q1164.8,52.6 1171.2,52.6 H1178.6"/><path d="M1173.8,72.6 V64 Q1173.8,58.6 1179.2,58.6 H1182.2 M1173.8,66.8 H1179"/></g>
<!-- last -->
<rect x="1192.6" y="50.6" width="23" height="23" fill="#444" stroke="#ffffff" stroke-width="1.3"/>
<rect x="1196" y="54" width="16.2" height="16.2" fill="#ffffff"/><path d="M1198,56.2 H1210 L1198,68 Z" fill="#444"/>
</svg>

<div class="grip" style="left:1px;top:82px;height:35px;width:1px"></div>
<div id="ribbon">
<div id="rtabs"></div>
<div id="rpanel"></div>
<div id="rtab-act"></div>
<div class="rtab" style="left:29px;color:#d4e2f2">建模</div>
<div class="rtab" style="left:90px">自由形式</div>
<div class="rtab" style="left:189px">选择</div>
<div class="rtab" style="left:265px">对象绘制</div>
<div class="rtab" style="left:365px">填充</div>
<svg class="abs" style="left:420px;top:6px" width="26" height="9" viewBox="0 0 26 9"><rect x="0" y="0.6" width="14.4" height="7.6" rx="3" fill="#e8ecf0"/><path d="M4.4,3 H10.4 L7.4,6 Z" fill="#2a2a2a"/><path d="M19,3.6 H24.4 L21.7,6.4 Z" fill="#b0b0b0"/></svg>
<div id="rlabel">多边形建模</div>
</div>

<div id="lp">
<div class="abs" style="left:0;top:126px;width:120px;height:1px;background:repeating-linear-gradient(to right,#444 0 1px,#cfcfcf 1px 2px)"></div><div class="abs" style="left:0;top:128px;width:119px;height:1px;background:repeating-linear-gradient(to right,#cfcfcf 0 1px,#444 1px 2px)"></div>
<svg class="abs" style="left:0;top:133px" width="124" height="16" viewBox="0 133 124 16">
<g fill="#5c5c5c"><rect x="-3" y="135" width="10" height="11.6" rx="2.5"/><rect x="9" y="135" width="9" height="11.6" rx="2.5"/><rect x="101" y="135" width="9" height="11.6" rx="2.5"/><rect x="112" y="135" width="9.4" height="11.6" rx="2.5"/></g>
<g fill="none" stroke="#f0a060" stroke-width="1.2"><path d="M4.6,137 L0.8,140.8 L4.6,144.6"/><path d="M10.6,136.6 Q13.5,142 16.4,136.6 M10.6,146 Q13.5,139.6 16.4,146 M10.4,139 L16.6,144.4 M16.6,139 L10.4,144.4"/><path d="M102.6,137 L108.6,145 M108.6,137 L102.6,145"/><path d="M114.6,137 L118.6,140.8 L114.6,144.6"/></g>
<text x="32" y="145" font-family="Liberation Mono,monospace" font-size="10" fill="#8c9c9c" transform="translate(0,-29) scale(1,1.2)" textLength="59" lengthAdjust="spacingAndGlyphs">RappaTools</text>
</svg>
<div class="ro" style="top:149px;height:19px"></div>
<div class="roh" style="top:149px"><i></i><b>选择</b><u></u></div>
<div class="ro" style="top:172px;height:19px"></div>
<div class="roh" style="top:172px"><i></i><b>建模</b><u></u></div>
<div class="ro" style="top:195px;height:19px"></div>
<div class="roh" style="top:195px"><i></i><b>杂项</b><u></u></div>
<div class="ro" style="top:218px;height:19px"></div>
<div class="roh" style="top:218px"><i></i><b>视口</b><u></u></div>
<div class="ro" style="top:241px;height:19px"></div>
<div class="roh" style="top:241px"><i></i><b>材质</b><u></u></div>
<div class="ro" style="top:264px;height:19px"></div>
<div class="roh" style="top:264px"><i></i><b>渲染</b><u></u></div>
<div class="ro" style="top:287px;height:187px"></div>
<div class="roh" style="top:287px"><i class="dn"></i><b>其他</b><u></u></div>
<div class="bar" style="top:311px;width:110px;height:5px"></div>
<div class="abs" style="left:24.5px;top:309px;width:80px;font:11px/14px 'Liberation Mono',monospace;color:#f0f0f0;white-space:nowrap;letter-spacing:5.6px">******</div>
<div class="btn" style="left:5px;top:320px;width:63px">随机选择</div>
<div class="spn" style="left:72px;top:320px;width:42.5px">50</div>
<div class="btn" style="left:5px;top:338px;width:63px">删除 %</div>
<div class="spn" style="left:72px;top:338px;width:42.5px">50</div>
<div class="btn" style="left:5px;top:356px;width:63px">切块</div>
<div class="spn" style="left:72px;top:356px;width:42.5px">50</div>
<div class="btn" style="left:5px;top:374px;width:63px">生长结构</div>
<div class="spn" style="left:72px;top:374px;width:42.5px">50</div>
<div class="btn" style="left:5px;top:392px;width:63px">设置ID</div>
<div class="spn" style="left:72px;top:392px;width:42.5px">1</div>
<div class="btn" style="left:5px;top:410px;width:52px">拾取ID</div>
<div class="btn" style="left:62px;top:410px;width:53px">随机ID</div>
<div class="btn" style="left:5px;top:428px;width:52px">交换</div>
<div class="btn" style="left:62px;top:428px;width:53px">表面</div>
<div class="btn" style="left:5px;top:446px;width:52px">积雪</div>
<div class="btn" style="left:62px;top:446px;width:53px">相机抖动</div>
<div class="bar" style="top:465px;width:110px"></div>
<div class="ro" style="top:479px;height:300px"></div>
<div class="roh" style="top:479px"><i class="dn"></i><b>自定义</b><u></u></div>
<div class="btn" style="left:5px;top:503px;width:83px;height:22px;line-height:24px">单位设置</div>
<div class="btn" style="left:92px;top:503px;width:22px;height:22px"></div>
<svg class="abs" style="left:94px;top:504px" width="18" height="20" viewBox="0 0 18 20"><path d="M1.2,1.6 Q9,0.2 16.8,1.6 V9 Q16.8,15 9,18.8 Q1.2,15 1.2,9 Z" fill="#1fa050" stroke="#e8e8e8" stroke-width="1.5"/><path d="M5.2,9.4 L8,12.2 L13,6.6" fill="none" stroke="#fff" stroke-width="2"/></svg>
<div class="btn" style="left:5px;top:530px;width:109px">切换相机</div>
<div class="btn" style="left:5px;top:548px;width:109px">粘贴 CAD</div>
<div class="btn" style="left:5px;top:566px;width:109px">交点焊接</div>
<div class="btn" style="left:5px;top:584px;width:109px">快速选择</div>
<div class="btn" style="left:5px;top:602px;width:109px">切线对齐</div>
<div class="btn" style="left:5px;top:619px;width:83px">编辑样条线</div>
<div class="btn" style="left:92px;top:619px;width:22px">点</div>
<div class="btn" style="left:5px;top:637px;width:20px;letter-spacing:.5px">12</div>
<div class="btn" style="left:27px;top:637px;width:19px;letter-spacing:.5px">24</div>
<div class="btn" style="left:49px;top:637px;width:19px">&gt;</div>
<div class="spn" style="left:71px;top:637px;width:43px;letter-spacing:1px">6.0</div>
<div class="btn" style="left:5px;top:655px;width:53px">线条检测</div>
<div class="btn" style="left:61px;top:655px;width:53px">线条工具</div>
<div class="btn" style="left:5px;top:673px;width:109px;word-spacing:3px">锁 定</div>
<div class="btn" style="left:5px;top:691px;width:53px">灯光开</div>
<div class="btn" style="left:61px;top:691px;width:53px">灯光关</div>
<div class="btn" style="left:5px;top:709px;width:109px">快速环境</div>
<div class="btn" style="left:5px;top:727px;width:109px">脚本收藏</div>
<div class="btn" style="left:5px;top:745px;width:109px">快速加密</div>
<div class="bar" style="top:762px;width:109px"></div>
</div>
<div id="vp"><div id="vplabel"><span style="left:-0.5px;letter-spacing:1.3px">[+]</span><span style="left:22px">[顶 ]</span><span style="left:49px">[标准 ]</span><span style="left:86px">[线框 ]</span></div></div>
<div id="ex">
<svg style="left:10px;top:6px" width="13" height="16" viewBox="0 0 13 16"><path d="M0.5,0.5 H11.5 V15.5 H0.5 Z" fill="#ffe89e" stroke="#f4cd5c" stroke-width="1"/><path d="M10.5,9.5 H12.5 V15.5 H10.5 Z" fill="#ffe89e" stroke="#f0c44e" stroke-width="1"/></svg>
<div class="abs" style="left:31px;top:8px;width:1px;height:11px;background:#8a8a8a"></div>
<svg style="left:43px;top:7px" width="13" height="16" viewBox="0 0 13 16"><path d="M0.5,0.5 H8.5 L11.5,3.5 V15.5 H0.5 Z" fill="#fafafa" stroke="#808890" stroke-width="1"/><path d="M8.5,0.5 V3.5 H11.5" fill="none" stroke="#808890" stroke-width="1"/><path d="M2.6,8.6 L5,11 L9.6,6.2" fill="none" stroke="#e0702c" stroke-width="1.5"/></svg>
<svg style="left:65px;top:7px" width="13" height="16" viewBox="0 0 13 16"><path d="M0.5,0.5 H11.5 V15.5 H0.5 Z" fill="#ffe89e" stroke="#f4cd5c" stroke-width="1"/><path d="M10.5,9.5 H12.5 V15.5 H10.5 Z" fill="#ffe89e" stroke="#f0c44e" stroke-width="1"/></svg>
<svg style="left:86px;top:12px" width="9" height="8" viewBox="0 0 9 8"><path d="M0.5,1 H7.5" stroke="#222" stroke-width="1.2"/><path d="M0.6,3.4 H7.4 L4,7 Z" fill="#222"/></svg>
<div class="abs" style="left:101px;top:8px;width:1px;height:11px;background:#8a8a8a"></div>
<div class="t tt" style="left:109px;top:7px;color:#909090;font-size:13px;letter-spacing:.1px;">SplineCombiner</div>
<div class="abs" style="left:0;top:30px;width:56px;height:23px;background:#0563b1"></div>
<div class="t" style="left:15.6px;top:35px;color:#fff;font-size:12.5px;">文件</div>
<div class="t" style="left:70px;top:35px;font-size:12.5px;">主页</div>
<div class="t" style="left:123px;top:35px;font-size:12.5px;">共享</div>
<div class="t" style="left:176px;top:35px;font-size:12.5px;">查看</div>
<div class="abs" style="left:0;top:56px;width:628px;height:1px;background:#dadbdc"></div>
<svg style="left:12px;top:69px" width="100" height="16" viewBox="606 303 100 16" fill="none" stroke-linecap="square">
<path d="M608,311 H618.5 M612.6,306.2 L607.8,311 L612.6,315.8" stroke="#5a5a5a" stroke-width="1.5"/>
<path d="M638,311 H648.5 M643.9,306.2 L648.7,311 L643.9,315.8" stroke="#c8ced2" stroke-width="1.5"/>
<path d="M663.4,309.8 L666,312.4 L668.6,309.8" stroke="#666" stroke-width="1.2"/>
<path d="M687,305.6 V317 M682.2,310.4 L687,305.6 L691.8,310.4" stroke="#5a5a5a" stroke-width="1.5"/>
</svg>
<div class="abs" style="left:106px;top:62px;width:540px;height:31px;border:1px solid #d9d9d9;border-right:0;background:#fff"></div>
<svg style="left:111px;top:69px" width="13" height="16" viewBox="0 0 13 16"><path d="M0.5,0.5 H11.5 V15.5 H0.5 Z" fill="#ffe89e" stroke="#f4cd5c" stroke-width="1"/><path d="M10.5,9.5 H12.5 V15.5 H10.5 Z" fill="#ffe89e" stroke="#f0c44e" stroke-width="1"/></svg>
<svg style="left:133px;top:73px" width="6" height="8" viewBox="0 0 6 8"><path d="M1.2,1 L4.2,4 L1.2,7" fill="none" stroke="#666" stroke-width="1.3"/></svg>
<svg style="left:194px;top:73px" width="6" height="8" viewBox="0 0 6 8"><path d="M1.2,1 L4.2,4 L1.2,7" fill="none" stroke="#666" stroke-width="1.3"/></svg>
<svg style="left:267px;top:73px" width="6" height="8" viewBox="0 0 6 8"><path d="M1.2,1 L4.2,4 L1.2,7" fill="none" stroke="#666" stroke-width="1.3"/></svg>
<svg style="left:341px;top:73px" width="6" height="8" viewBox="0 0 6 8"><path d="M1.2,1 L4.2,4 L1.2,7" fill="none" stroke="#666" stroke-width="1.3"/></svg>
<div class="t" style="left:147.6px;top:69px;">此电脑</div>
<div class="t" style="left:208.6px;top:69px;">软件 (D:)</div>
<div class="t" style="left:282px;top:69px;letter-spacing:.25px">max脚本</div>
<div class="t a1" style="left:355.3px;top:69px;">SplineCombiner</div>
<div class="abs" style="left:140px;top:100px;width:16px;height:440px;background:#f0f0f0"></div>
<div class="abs" style="left:141px;top:169px;width:14px;height:250px;background:#cdcdcd"></div>
<svg style="left:143px;top:106px" width="10" height="7" viewBox="0 0 10 7"><path d="M1.4,5.4 L5,1.8 L8.6,5.4" fill="none" stroke="#404040" stroke-width="1.7"/></svg>
<svg style="left:32px;top:106px" width="16" height="12" viewBox="0 0 16 12"><rect x="0.5" y="0.5" width="15" height="11" fill="#fdfdfd" stroke="#9a9a9a"/><rect x="2" y="2" width="12" height="8" fill="#bfe3f5"/><path d="M2,7 Q5,4.4 8,6.4 T14,6 V10 H2 Z" fill="#4a7a96"/><path d="M2,8.6 H14 V10 H2 Z" fill="#2c5a74"/></svg>
<div class="t" style="left:53.4px;top:103.7px;">图片</div>
<svg style="left:126px;top:106px" width="11" height="11" viewBox="0 0 11 11"><path d="M6.2,0.6 L10.4,4.8 L9,5.4 L7,7.4 L6.6,9.6 L1.6,4.4 L3.6,4 L5.6,2 Z" fill="#9a9a9a"/><path d="M4,7 L0.6,10.4" stroke="#9a9a9a" stroke-width="1.2"/></svg>
<svg style="left:24px;top:138px" width="17" height="11" viewBox="0 0 17 11"><path d="M4,10.6 A3.4,3.4 0 0 1 3.4,4 A4.6,4.6 0 0 1 11.8,2.8 A4,4 0 0 1 13,10.6 Z" fill="#1b86d9"/><path d="M4,10.6 A3.4,3.4 0 0 1 3.4,4 Q6,4 8.4,6.4 L12,10.6 Z" fill="#1270c4"/><path d="M3.4,4 A4.6,4.6 0 0 1 11.8,2.8 Q9,3 7.6,5.6 Q5.6,4 3.4,4 Z" fill="#3aa0ea"/></svg>
<div class="t od" style="left:45px;top:135.8px;">OneDrive - Personal</div>
<svg style="left:34px;top:159.9px" width="13" height="16" viewBox="0 0 13 16"><path d="M0.5,0.5 H11.5 V15.5 H0.5 Z" fill="#ffe89e" stroke="#f4cd5c" stroke-width="1"/><path d="M10.5,9.5 H12.5 V15.5 H10.5 Z" fill="#ffe89e" stroke="#f0c44e" stroke-width="1"/></svg>
<div class="t" style="left:53.4px;top:159.5px;">电子邮件附件</div>
<svg style="left:34px;top:183.9px" width="13" height="16" viewBox="0 0 13 16"><path d="M0.5,0.5 H11.5 V15.5 H0.5 Z" fill="#ffe89e" stroke="#f4cd5c" stroke-width="1"/><path d="M10.5,9.5 H12.5 V15.5 H10.5 Z" fill="#ffe89e" stroke="#f0c44e" stroke-width="1"/></svg>
<div class="t" style="left:53.4px;top:183.5px;">公开</div>
<svg style="left:34px;top:207.9px" width="13" height="16" viewBox="0 0 13 16"><path d="M0.5,0.5 H11.5 V15.5 H0.5 Z" fill="#ffe89e" stroke="#f4cd5c" stroke-width="1"/><path d="M10.5,9.5 H12.5 V15.5 H10.5 Z" fill="#ffe89e" stroke="#f0c44e" stroke-width="1"/></svg>
<div class="t" style="left:53.4px;top:207.5px;">图片</div>
<svg style="left:43px;top:231.9px" width="13" height="16" viewBox="0 0 13 16"><path d="M0.5,0.5 H11.5 V15.5 H0.5 Z" fill="#ffe89e" stroke="#f4cd5c" stroke-width="1"/><path d="M10.5,9.5 H12.5 V15.5 H10.5 Z" fill="#ffe89e" stroke="#f0c44e" stroke-width="1"/></svg>
<div class="t cr" style="left:61.4px;top:231.5px;">Camera Roll</div>
<svg style="left:43px;top:255.9px" width="13" height="16" viewBox="0 0 13 16"><path d="M0.5,0.5 H11.5 V15.5 H0.5 Z" fill="#ffe89e" stroke="#f4cd5c" stroke-width="1"/><path d="M10.5,9.5 H12.5 V15.5 H10.5 Z" fill="#ffe89e" stroke="#f0c44e" stroke-width="1"/></svg>
<div class="t ss" style="left:61.4px;top:255.5px;">Screenshots</div>
<svg style="left:43px;top:279.9px" width="13" height="16" viewBox="0 0 13 16"><path d="M0.5,0.5 H11.5 V15.5 H0.5 Z" fill="#ffe89e" stroke="#f4cd5c" stroke-width="1"/><path d="M10.5,9.5 H12.5 V15.5 H10.5 Z" fill="#ffe89e" stroke="#f0c44e" stroke-width="1"/></svg>
<div class="t" style="left:61.4px;top:279.5px;">已保存的图片</div>
<svg style="left:34px;top:303.9px" width="13" height="16" viewBox="0 0 13 16"><path d="M0.5,0.5 H11.5 V15.5 H0.5 Z" fill="#ffe89e" stroke="#f4cd5c" stroke-width="1"/><path d="M10.5,9.5 H12.5 V15.5 H10.5 Z" fill="#ffe89e" stroke="#f0c44e" stroke-width="1"/></svg>
<div class="t" style="left:53.4px;top:303.5px;">文档</div>
<svg style="left:24px;top:337px" width="17" height="15" viewBox="0 0 17 15"><defs><linearGradient id="scr" x1="0" y1="0" x2="1" y2="1"><stop offset="0" stop-color="#6fd8f2"/><stop offset="1" stop-color="#1f98d4"/></linearGradient></defs><rect x="0.4" y="0.4" width="16.2" height="10.2" fill="url(#scr)" stroke="#2a8ac0" stroke-width=".8"/><rect x="6.4" y="10.8" width="4.2" height="2" fill="#8aa0aa"/><rect x="0.6" y="13.2" width="15.8" height="1.2" fill="#9aa4a8"/></svg>
<div class="t" style="left:45px;top:335.7px;">此电脑</div>
<svg style="left:32px;top:360px" width="16" height="16" viewBox="0 0 16 16"><path d="M8,0.4 L15.6,3.4 V12.4 L8,15.6 L0.4,12.4 V3.4 Z" fill="#35b4e6"/><path d="M0.4,3.4 L8,6.4 V15.6 L0.4,12.4 Z" fill="#a6e4f6"/><path d="M8,6.4 L15.6,3.4 V12.4 L8,15.6 Z" fill="#1c86cc"/><path d="M8,0.4 L15.6,3.4 L8,6.4 L0.4,3.4 Z" fill="#5fd0f0"/></svg>
<div class="t" style="left:53.4px;top:359.7px;">3D 对象</div>
<svg style="left:32px;top:384px" width="16" height="14" viewBox="0 0 16 14"><ellipse cx="8" cy="7" rx="7.6" ry="5.6" fill="#b4b8ba"/><ellipse cx="8" cy="7" rx="5" ry="2.8" fill="#fff"/><path d="M2,8 Q6,3 10,6.6 T15,6" fill="none" stroke="#7c8488" stroke-width="1.6"/><path d="M2,9.6 Q6,12.6 11,10.4" fill="none" stroke="#e8eaea" stroke-width="1.2"/></svg>
<div class="t ad" style="left:53.4px;top:383.7px;">Autodesk 360</div>
<svg style="left:33px;top:409px" width="14" height="16" viewBox="0 0 14 16"><rect x="0" y="0" width="14" height="16" fill="#3a3a3a"/><rect x="3" y="0.8" width="8" height="6.6" fill="#3e62c8"/><rect x="3" y="8.6" width="8" height="6.6" fill="#3e62c8"/><rect x="5" y="2.4" width="4" height="3" fill="#e8a83a"/><rect x="5" y="10.2" width="4" height="3" fill="#e8a83a"/><g fill="#f4f4f4"><rect x="0.8" y="1" width="1.4" height="1.6"/><rect x="0.8" y="4" width="1.4" height="1.6"/><rect x="0.8" y="7" width="1.4" height="1.6"/><rect x="0.8" y="10" width="1.4" height="1.6"/><rect x="0.8" y="13" width="1.4" height="1.6"/><rect x="11.8" y="1" width="1.4" height="1.6"/><rect x="11.8" y="4" width="1.4" height="1.6"/><rect x="11.8" y="7" width="1.4" height="1.6"/><rect x="11.8" y="10" width="1.4" height="1.6"/><rect x="11.8" y="13" width="1.4" height="1.6"/></g></svg>
<div class="t" style="left:53.4px;top:407.7px;">视频</div>
<svg style="left:32px;top:434px" width="16" height="12" viewBox="0 0 16 12"><rect x="0.5" y="0.5" width="15" height="11" fill="#fdfdfd" stroke="#9a9a9a"/><rect x="2" y="2" width="12" height="8" fill="#bfe3f5"/><path d="M2,7 Q5,4.4 8,6.4 T14,6 V10 H2 Z" fill="#4a7a96"/><path d="M2,8.6 H14 V10 H2 Z" fill="#2c5a74"/></svg>
<div class="t" style="left:53.4px;top:431.7px;">图片</div>
<svg style="left:34px;top:456px" width="13" height="16" viewBox="0 0 13 16"><path d="M0.5,0.5 H8.5 L12.5,4.5 V15.5 H0.5 Z" fill="#fff" stroke="#8a8a8a"/><path d="M8.5,0.5 V4.5 H12.5" fill="none" stroke="#8a8a8a"/><path d="M3,4 H7 M3,6.4 H10 M3,11 H10 M3,13 H10" stroke="#6a8ab0" stroke-width="1"/><path d="M3,8.6 H10" stroke="#2a7ad8" stroke-width="1.6"/></svg>
<div class="t" style="left:53.4px;top:455.7px;">文档</div>
<svg style="left:32px;top:480px" width="16" height="16" viewBox="0 0 16 16"><path d="M5.4,0 H10.6 V7.4 H16 L8,16 L0,7.4 H5.4 Z" fill="#2e8ee2"/></svg>
<div class="t" style="left:53.4px;top:479.7px;">下载</div>
<svg style="left:34px;top:504px" width="12" height="16" viewBox="0 0 12 16"><path d="M5,0 H6.6 C7,3 11.4,4.4 9.6,9.6 C9.8,6.6 8,5.4 6.6,5 V12.6 A3.3,3 0 1 1 5,10 Z" fill="#2e8ee2"/></svg>
<div class="t" style="left:53.4px;top:503.7px;">音乐</div>
<div class="abs" style="left:32px;top:530px;width:16px;height:10px;background:#1f86e0"></div>
<div class="t" style="left:53.4px;top:527.7px;">桌面</div>
<div id="divl" class="abs" style="left:158px;top:100px;width:1px;height:440px;background:#f3f3f3"></div>
<div class="abs" style="left:174px;top:106px;width:105px;height:135px;background:#d9d9d9"></div>
<svg style="left:174px;top:106px" width="105" height="92" viewBox="768 340 105 92">
<defs>
<linearGradient id="gr" x1="0" y1="0" x2="0" y2="1"><stop offset="0" stop-color="#e0825a"/><stop offset=".08" stop-color="#d43c52"/><stop offset=".45" stop-color="#c22c40"/><stop offset=".55" stop-color="#a4202e"/><stop offset="1" stop-color="#8e1c2a"/></linearGradient>
<linearGradient id="gb" x1="0" y1="0" x2="0" y2="1"><stop offset="0" stop-color="#6a82dc"/><stop offset=".1" stop-color="#546cd0"/><stop offset=".45" stop-color="#4258bc"/><stop offset=".55" stop-color="#3040a0"/><stop offset="1" stop-color="#283690"/></linearGradient>
<linearGradient id="gg" x1="0" y1="0" x2="0" y2="1"><stop offset="0" stop-color="#3cc060"/><stop offset=".1" stop-color="#1ea844"/><stop offset=".45" stop-color="#148a36"/><stop offset=".55" stop-color="#0e6e2a"/><stop offset="1" stop-color="#0c5a24"/></linearGradient>
<linearGradient id="gbelt" x1="0" y1="0" x2="1" y2="0"><stop offset="0" stop-color="#d08a26"/><stop offset=".3" stop-color="#e6a838"/><stop offset=".7" stop-color="#d89030"/><stop offset="1" stop-color="#b86c1c"/></linearGradient>
<linearGradient id="gsil" x1="0" y1="0" x2="0" y2="1"><stop offset="0" stop-color="#f4f4f4"/><stop offset="1" stop-color="#bcbcbc"/></linearGradient>
</defs>
<ellipse cx="820" cy="427" rx="46" ry="2.6" fill="#b0b0b0" opacity=".6"/>
<rect x="774.2" y="351" width="91.2" height="24" rx="2.5" fill="url(#gr)"/>
<rect x="774.2" y="374.8" width="91.2" height="25.8" rx="2.5" fill="url(#gb)"/>
<rect x="774.2" y="400.4" width="91.2" height="25.4" rx="2.5" fill="url(#gg)"/>
<g fill="#f0b030"><rect x="780.7" y="354" width="4" height="18" rx="1"/><rect x="780.7" y="379" width="4" height="18" rx="1"/><rect x="780.7" y="404" width="4" height="18" rx="1"/></g>
<rect x="807.6" y="349" width="24.3" height="77" rx="1.5" fill="url(#gbelt)"/>
<path d="M810,366 V360 Q810,353 819.7,353 Q829.4,353 829.4,360 V366 Z" fill="#eeb440"/>
<rect x="807" y="366.4" width="25.4" height="8.6" fill="#cc8028"/>
<rect x="807.6" y="375" width="24.3" height="27" fill="#d88e2c"/>
<rect x="807.6" y="404" width="24.3" height="22" fill="#cf8426"/>
<circle cx="819.7" cy="379.5" r="1.7" fill="#8a4a14"/>
<path d="M805.2,381.5 V398 Q805.2,402.2 809.4,402.2 H830 Q834.2,402.2 834.2,398 V381.5" fill="none" stroke="url(#gsil)" stroke-width="3.2"/>
<path d="M806,400.6 H833.4" stroke="#e2e2e2" stroke-width="4.6" stroke-linecap="round"/><path d="M804.6,403.4 H835" stroke="#a4a4a4" stroke-width=".9"/>
<rect x="818.1" y="390.4" width="3.3" height="10.6" rx="1.6" fill="#ececec" stroke="#a8a8a8" stroke-width=".5"/>
</svg>
<div class="t f1" style="left:174px;top:205px;text-align:center;width:105px;">SplineCombiner</div>
<div class="t f2" style="left:174px;top:222px;text-align:center;width:105px;">_v1.08_cn.mzp</div>
<svg style="left:567px;top:519px" width="14" height="20" viewBox="0 0 14 20"><path d="M0.6,0.8 V17 L4.4,13.4 L7,19.4 L9.4,18.4 L6.8,12.6 H12 Z" fill="#fff" stroke="#111" stroke-width="1"/></svg>
</div>
</div>
</body>
</html>
